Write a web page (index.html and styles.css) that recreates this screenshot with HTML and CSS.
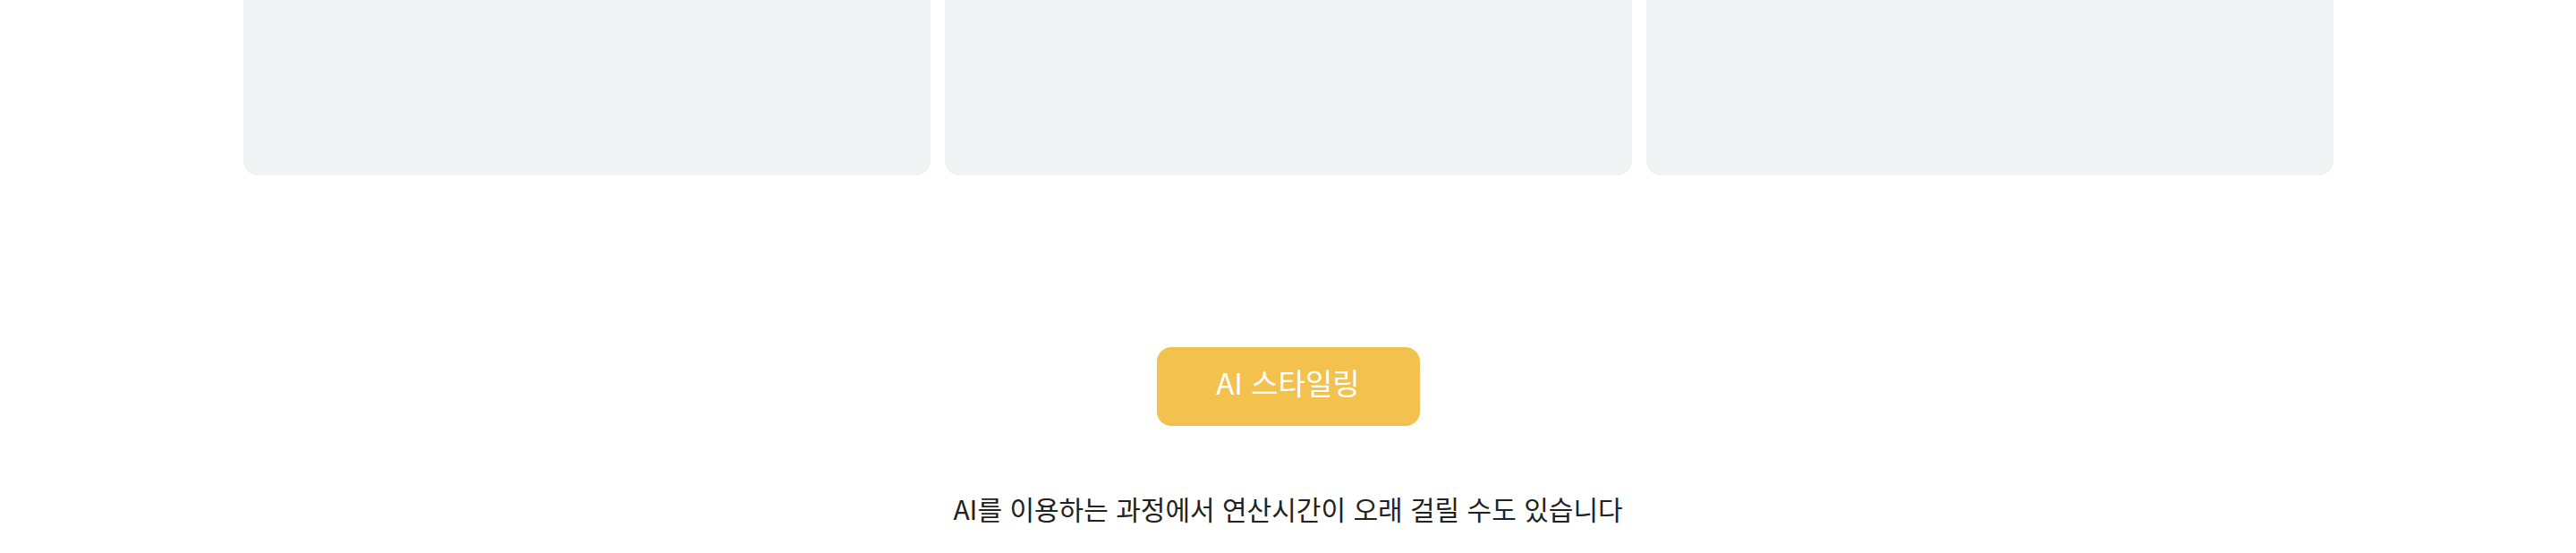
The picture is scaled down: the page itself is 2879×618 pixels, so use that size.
FILE: index.html
```html
<!DOCTYPE html>
<html lang="ko">
<head>
<meta charset="utf-8">
<title>AI 스타일링</title>
<link rel="stylesheet" href="styles.css">
</head>
<body>
<main class="page">
  <section class="cards">
    <div class="card"></div>
    <div class="card"></div>
    <div class="card"></div>
  </section>
  <section class="action">
    <button class="btn-ai" type="button">AI 스타일링</button>
    <p class="notice">AI를 이용하는 과정에서 연산시간이 오래 걸릴 수도 있습니다</p>
  </section>
</main>
</body>
</html>
```

FILE: styles.css
```css
html, body {
  margin: 0;
  padding: 0;
  background: #ffffff;
}

body {
  font-family: "Noto Sans CJK KR", "Noto Sans", sans-serif;
  color: #222222;
}

.page {
  width: 2336px;
  margin: 0 auto;
}

.cards {
  display: grid;
  grid-template-columns: repeat(3, 1fr);
  gap: 16px;
}

.card {
  height: 196px;
  background: #f2f3f5;
  border-radius: 0 0 16px 16px;
}

.action {
  display: flex;
  flex-direction: column;
  align-items: center;
  padding-top: 192px;
}

.btn-ai {
  box-sizing: border-box;
  display: flex;
  align-items: center;
  justify-content: center;
  width: 294px;
  height: 88px;
  padding: 0 0 11px;
  border: none;
  border-radius: 16px;
  background: #f2c14e;
  color: #ffffff;
  font-family: "Noto Sans CJK KR", "Noto Sans", sans-serif;
  font-size: 33px;
  line-height: normal;
}

.notice {
  margin: 72px 0 0;
  font-size: 30px;
  line-height: 40px;
  color: #222222;
}
```
